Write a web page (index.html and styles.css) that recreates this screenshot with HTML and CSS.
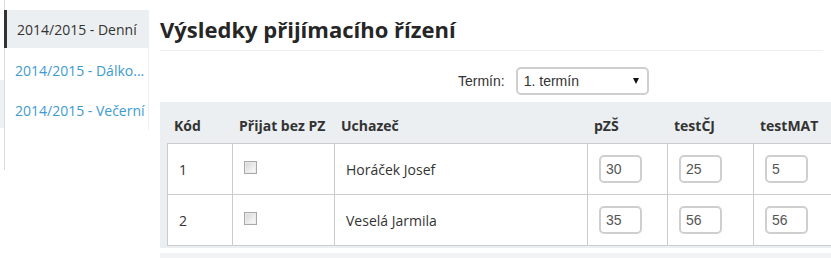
FILE: index.html
```html
<!DOCTYPE html>
<html lang="cs">
<head>
<meta charset="utf-8">
<title>Výsledky přijímacího řízení</title>
<link rel="stylesheet" href="styles.css">
</head>
<body>
<div class="page">
  <div class="edge"><div class="edge-block"></div></div>
  <aside class="side">
    <nav class="nav">
      <a class="nav-item active" href="#">2014/2015 - Denní</a>
      <a class="nav-item" href="#">2014/2015 - Dálko...</a>
      <a class="nav-item" href="#">2014/2015 - Večerní</a>
    </nav>
  </aside>
  <main class="main">
    <h1 class="title">Výsledky přijímacího řízení</h1>
    <div class="rule"></div>
    <div class="filter">
      <span class="filter-label">Termín:</span>
      <div class="sel">
        <span class="sel-text">1. termín</span>
        <span class="sel-arrow"></span>
      </div>
    </div>
    <div class="panel">
      <div class="head">
        <div class="h">Kód</div>
        <div class="h">Přijat bez PZ</div>
        <div class="h">Uchazeč</div>
        <div class="h">pZŠ</div>
        <div class="h">testČJ</div>
        <div class="h">testMAT</div>
      </div>
      <div class="rows">
        <div class="cell">1</div>
        <div class="cell"><span class="chk"></span></div>
        <div class="cell">Horáček Josef</div>
        <div class="cell"><span class="num">30</span></div>
        <div class="cell"><span class="num">25</span></div>
        <div class="cell"><span class="num">5</span></div>

        <div class="cell">2</div>
        <div class="cell"><span class="chk"></span></div>
        <div class="cell">Veselá Jarmila</div>
        <div class="cell"><span class="num">35</span></div>
        <div class="cell"><span class="num">56</span></div>
        <div class="cell"><span class="num">56</span></div>
      </div>
    </div>
    <div class="next"></div>
  </main>
</div>
</body>
</html>
```
FILE: styles.css
```css
html, body {
  margin: 0;
  padding: 0;
  overflow: hidden;
  background: #fff;
}
body {
  font-family: "Open Sans", "Noto Sans", sans-serif;
  font-size: 14px;
  color: #333;
}
.page {
  display: flex;
  align-items: flex-start;
  width: 831px;
  height: 258px;
  overflow: hidden;
}
.edge {
  width: 4px;
  flex: none;
}
.edge-block {
  margin-top: 80px;
  height: 48px;
  background: #eef1f3;
}
.side {
  flex: none;
  width: 144px;
  height: 170px;
  border-left: 1px solid #dcdcdc;
}
.nav {
  margin-top: 10px;
  display: flex;
  flex-direction: column;
  border-right: 1px solid #eceff1;
}
.nav-item {
  display: flex;
  align-items: center;
  height: 40px;
  padding-left: 10px;
  color: #3d9bd0;
  text-decoration: none;
  white-space: nowrap;
  overflow: hidden;
}
.nav-item.active {
  color: #333;
  background: #eceff1;
  border-left: 3px solid #333;
  margin-left: -1px;
  height: 38px;
  margin-bottom: 2px;
}
.main {
  flex: none;
  margin-left: 11px;
  width: 663px;
}
.title {
  margin: 14px 0 0;
  font-size: 22px;
  line-height: 30px;
  font-weight: 700;
  color: #262626;
}
.rule {
  margin-top: 6px;
  height: 1px;
  background: #eeeeee;
}
.filter {
  display: flex;
  align-items: center;
  margin-top: 16px;
  padding-left: 298px;
  height: 28px;
  font-family: "Liberation Sans", Arial, sans-serif;
}
.filter-label {
  margin-right: 11px;
  color: #333;
}
.sel {
  display: flex;
  align-items: center;
  justify-content: space-between;
  width: 133px;
  height: 28px;
  box-sizing: border-box;
  border: 2px solid #cfcfcf;
  border-radius: 5px;
  background: #fff;
  padding: 0 8px 0 6px;
  color: #333;
}
.sel-arrow {
  width: 0;
  height: 0;
  border-left: 3px solid transparent;
  border-right: 3px solid transparent;
  border-top: 6px solid #111;
}
.panel {
  margin-top: 7px;
  width: 686px;
  padding: 0 7px 2px;
  box-sizing: border-box;
  background: #eceff1;
}
.head,
.rows {
  display: grid;
  grid-template-columns: 65px 102px 253px 80px 86px 86px;
}
.head {
  height: 41px;
  align-items: center;
  padding-top: 6px;
  box-sizing: border-box;
}
.h {
  padding: 0 7px;
  font-weight: 700;
  color: #333;
}
.rows {
  border-left: 1px solid #cccccc;
  background: #fff;
}
.cell {
  display: flex;
  align-items: center;
  height: 51px;
  box-sizing: border-box;
  padding-left: 11px;
  border-right: 1px solid #cccccc;
  border-bottom: 1px solid #cccccc;
  color: #333;
}
.cell:nth-child(-n+6) {
  border-top: 1px solid #cccccc;
  height: 52px;
}
.chk {
  display: block;
  width: 13px;
  height: 13px;
  margin-bottom: 4px;
  box-sizing: border-box;
  border: 1px solid #a8a8a8;
  background: linear-gradient(135deg, #d4d4d4 0%, #f2f2f2 70%, #ffffff 100%);
  box-shadow: inset 0 0 0 1px #ebebeb;
}
.num {
  display: flex;
  align-items: center;
  width: 43px;
  height: 28px;
  box-sizing: border-box;
  border: 2px solid #cfcfcf;
  border-radius: 5px;
  padding-left: 5px;
  font-family: "Liberation Sans", Arial, sans-serif;
  font-size: 14px;
  color: #555;
  background: #fff;
}
.next {
  margin-top: 5px;
  width: 686px;
  height: 6px;
  background: #f1f3f4;
}
```
